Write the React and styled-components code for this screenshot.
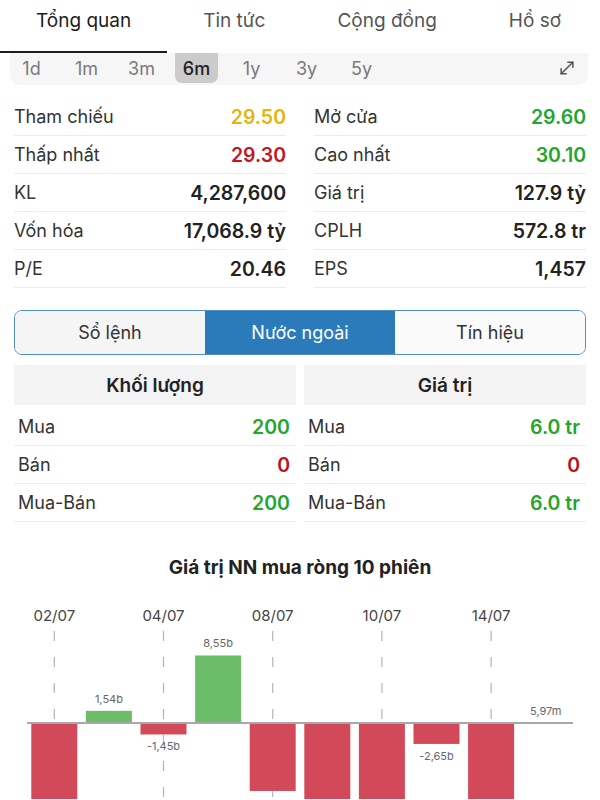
import React, { useState } from "react";
import styled, { createGlobalStyle } from "styled-components";
import { MoveDiagonal } from "lucide-react";

const GlobalStyle = createGlobalStyle`
  html, body {
    margin: 0;
    padding: 0;
    background: #fff;
    overflow: hidden;
  }
  body {
    font-family: Inter, "Noto Sans", "Liberation Sans", sans-serif;
    color: #222;
  }
`;

const Page = styled.div`
  width: 600px;
  height: 800px;
  overflow: hidden;
  background: #fff;
`;

//=========================== TOP TABS =========================

const TabBar = styled.div`
  display: flex;
  height: 53px;
`;

const Tab = styled.div`
  box-sizing: border-box;
  height: 53px;
  padding: 9px 36px 0;
  font-size: 19px;
  line-height: 24px;
  color: ${(p) => (p.$active ? "#1c1c1c" : "#555")};
  border-bottom: 2.5px solid ${(p) => (p.$active ? "#1c1c1c" : "transparent")};
  white-space: nowrap;
`;

//=========================== PERIOD BAR =========================

const PeriodBar = styled.div`
  display: flex;
  align-items: flex-start;
  height: 32px;
  margin: 0 12px 0 10px;
  background: #f6f6f6;
  border-radius: 0 0 10px 10px;
`;

const Period = styled.div`
  width: 43px;
  height: 30px;
  margin-right: 12px;
  display: flex;
  align-items: center;
  justify-content: center;
  font-size: 18px;
  color: ${(p) => (p.$active ? "#222" : "#7a7a7a")};
  font-weight: ${(p) => (p.$active ? 500 : 400)};
  background: ${(p) => (p.$active ? "#cbcbcb" : "transparent")};
  border-radius: 0 0 7px 7px;
`;

const ExpandBtn = styled.div`
  margin-left: auto;
  padding-right: 11px;
  height: 30px;
  display: flex;
  align-items: center;
  color: #555;
`;

//=========================== INFO GRID =========================

const InfoGrid = styled.div`
  display: grid;
  grid-template-columns: 1fr 1fr;
  column-gap: 28px;
  padding: 0 14px;
  margin-top: 13px;
`;

const Row = styled.div`
  box-sizing: border-box;
  height: 38px;
  display: flex;
  align-items: center;
  justify-content: space-between;
  border-bottom: 1px solid #ececec;
  padding: ${(p) => p.$pad || "0"};
  font-size: 18px;
`;

const Label = styled.span`
  color: #333;
`;

const Value = styled.span`
  font-size: 19.5px;
  font-weight: 600;
  color: ${(p) => p.$color || "#222"};
`;

//=========================== SEGMENTED =========================

const Segmented = styled.div`
  display: grid;
  grid-template-columns: repeat(3, 1fr);
  height: 45px;
  margin: 22px 14px 0;
  border: 1.5px solid #4f8fc6;
  border-radius: 8px;
  overflow: hidden;
  box-sizing: border-box;
`;

const Segment = styled.div`
  display: flex;
  align-items: center;
  justify-content: center;
  font-size: 18px;
  color: ${(p) => (p.$active ? "#fff" : "#333")};
  background: ${(p) => (p.$active ? "#2b7bbb" : p.$bg || "#f5f5f5")};
`;

//=========================== FOREIGN TABLE =========================

const ForeignGrid = styled.div`
  display: grid;
  grid-template-columns: 1fr 1fr;
  column-gap: 8px;
  padding: 0 14px;
  margin-top: 10px;
`;

const Col = styled.div`
  display: flex;
  flex-direction: column;
`;

const HeadCell = styled.div`
  height: 40px;
  margin-bottom: 3px;
  display: flex;
  align-items: center;
  justify-content: center;
  background: #f3f3f3;
  font-size: 19px;
  font-weight: 600;
  color: #222;
`;

const ChartTitle = styled.div`
  margin-top: 34px;
  text-align: center;
  font-size: 19px;
  line-height: 24px;
  font-weight: 700;
  color: #222;
`;

const ChartBox = styled.div`
  margin-top: 9px;
  height: 210px;
`;

const info = [
  [
    { label: "Tham chiếu", value: "29.50", color: "#e5b50a" },
    { label: "Thấp nhất", value: "29.30", color: "#c5161d" },
    { label: "KL", value: "4,287,600" },
    { label: "Vốn hóa", value: "17,068.9 tỷ" },
    { label: "P/E", value: "20.46" },
  ],
  [
    { label: "Mở cửa", value: "29.60", color: "#22a62c" },
    { label: "Cao nhất", value: "30.10", color: "#22a62c" },
    { label: "Giá trị", value: "127.9 tỷ" },
    { label: "CPLH", value: "572.8 tr" },
    { label: "EPS", value: "1,457" },
  ],
];

const foreign = [
  {
    title: "Khối lượng",
    rows: [
      { label: "Mua", value: "200", color: "#22a62c" },
      { label: "Bán", value: "0", color: "#b8141c" },
      { label: "Mua-Bán", value: "200", color: "#22a62c" },
    ],
  },
  {
    title: "Giá trị",
    rows: [
      { label: "Mua", value: "6.0 tr", color: "#22a62c" },
      { label: "Bán", value: "0", color: "#b8141c" },
      { label: "Mua-Bán", value: "6.0 tr", color: "#22a62c" },
    ],
  },
];

const bars = [
  { v: -14, date: "02/07" },
  { v: 1.54, label: "1,54b" },
  { v: -1.45, label: "-1,45b", date: "04/07" },
  { v: 8.55, label: "8,55b" },
  { v: -8.6, date: "08/07" },
  { v: -13 },
  { v: -14, date: "10/07" },
  { v: -2.65, label: "-2,65b" },
  { v: -12, date: "14/07" },
  { v: 0.006, label: "5,97m" },
];

//=========================== CHART =========================

function NetChart() {
  const x0 = 27;
  const pitch = 54.6;
  const barW = 46;
  const zero = 134;
  const k = 7.9;

  return (
    <svg width="600" height="210" viewBox="0 0 600 210">
      {bars.map((b, i) =>
        b.date ? (
          <g key={"d" + i}>
            <text
              x={x0 + pitch * i + pitch / 2}
              y="26"
              textAnchor="middle"
              dominantBaseline="central"
              fontSize="15"
              fill="#444"
              fontFamily="Inter, sans-serif"
            >
              {b.date}
            </text>
            <line
              x1={x0 + pitch * i + pitch / 2}
              x2={x0 + pitch * i + pitch / 2}
              y1="42"
              y2="210"
              stroke="#b4b4b4"
              strokeWidth="1.2"
              strokeDasharray="10 16"
            />
          </g>
        ) : null
      )}
      {bars.map((b, i) => {
        const h = Math.abs(b.v) * k;
        const x = x0 + pitch * i + (pitch - barW) / 2;
        const pos = b.v >= 0;
        return (
          <g key={"b" + i}>
            <rect
              x={x}
              y={pos ? zero - h : zero}
              width={barW}
              height={h}
              fill={pos ? "#6cbd67" : "#d2495a"}
            />
            {b.label && (
              <text
                x={x + barW / 2}
                y={pos ? zero - h - 12 : zero + h + 12}
                textAnchor="middle"
                dominantBaseline="central"
                fontSize="11"
                fill="#666"
                fontFamily="Inter, sans-serif"
              >
                {b.label}
              </text>
            )}
          </g>
        );
      })}
      <line x1="27" x2="573" y1={zero} y2={zero} stroke="#a8a8a8" strokeWidth="2" />
    </svg>
  );
}

export default function App() {
  const [tab, setTab] = useState(0);
  const [period, setPeriod] = useState("6m");
  const [seg, setSeg] = useState(1);

  return (
    <Page>
      <GlobalStyle />
      <TabBar>
        {["Tổng quan", "Tin tức", "Cộng đồng", "Hồ sơ"].map((t, i) => (
          <Tab key={t} $active={tab === i} onClick={() => setTab(i)}>
            {t}
          </Tab>
        ))}
      </TabBar>

      <PeriodBar>
        {["1d", "1m", "3m", "6m", "1y", "3y", "5y"].map((p) => (
          <Period key={p} $active={period === p} onClick={() => setPeriod(p)}>
            {p}
          </Period>
        ))}
        <ExpandBtn>
          <MoveDiagonal size={20} strokeWidth={1.8} />
        </ExpandBtn>
      </PeriodBar>

      <InfoGrid>
        {info.map((col, ci) => (
          <Col key={ci}>
            {col.map((r) => (
              <Row key={r.label}>
                <Label>{r.label}</Label>
                <Value $color={r.color}>{r.value}</Value>
              </Row>
            ))}
          </Col>
        ))}
      </InfoGrid>

      <Segmented>
        {["Sổ lệnh", "Nước ngoài", "Tín hiệu"].map((s, i) => (
          <Segment
            key={s}
            $active={seg === i}
            $bg={i === 2 ? "#fafafa" : "#f5f5f5"}
            onClick={() => setSeg(i)}
          >
            {s}
          </Segment>
        ))}
      </Segmented>

      <ForeignGrid>
        {foreign.map((f) => (
          <Col key={f.title}>
            <HeadCell>{f.title}</HeadCell>
            {f.rows.map((r) => (
              <Row key={r.label} $pad="0 6px 0 4px">
                <Label>{r.label}</Label>
                <Value $color={r.color}>{r.value}</Value>
              </Row>
            ))}
          </Col>
        ))}
      </ForeignGrid>

      <ChartTitle>Giá trị NN mua ròng 10 phiên</ChartTitle>
      <ChartBox>
        <NetChart />
      </ChartBox>
    </Page>
  );
}
